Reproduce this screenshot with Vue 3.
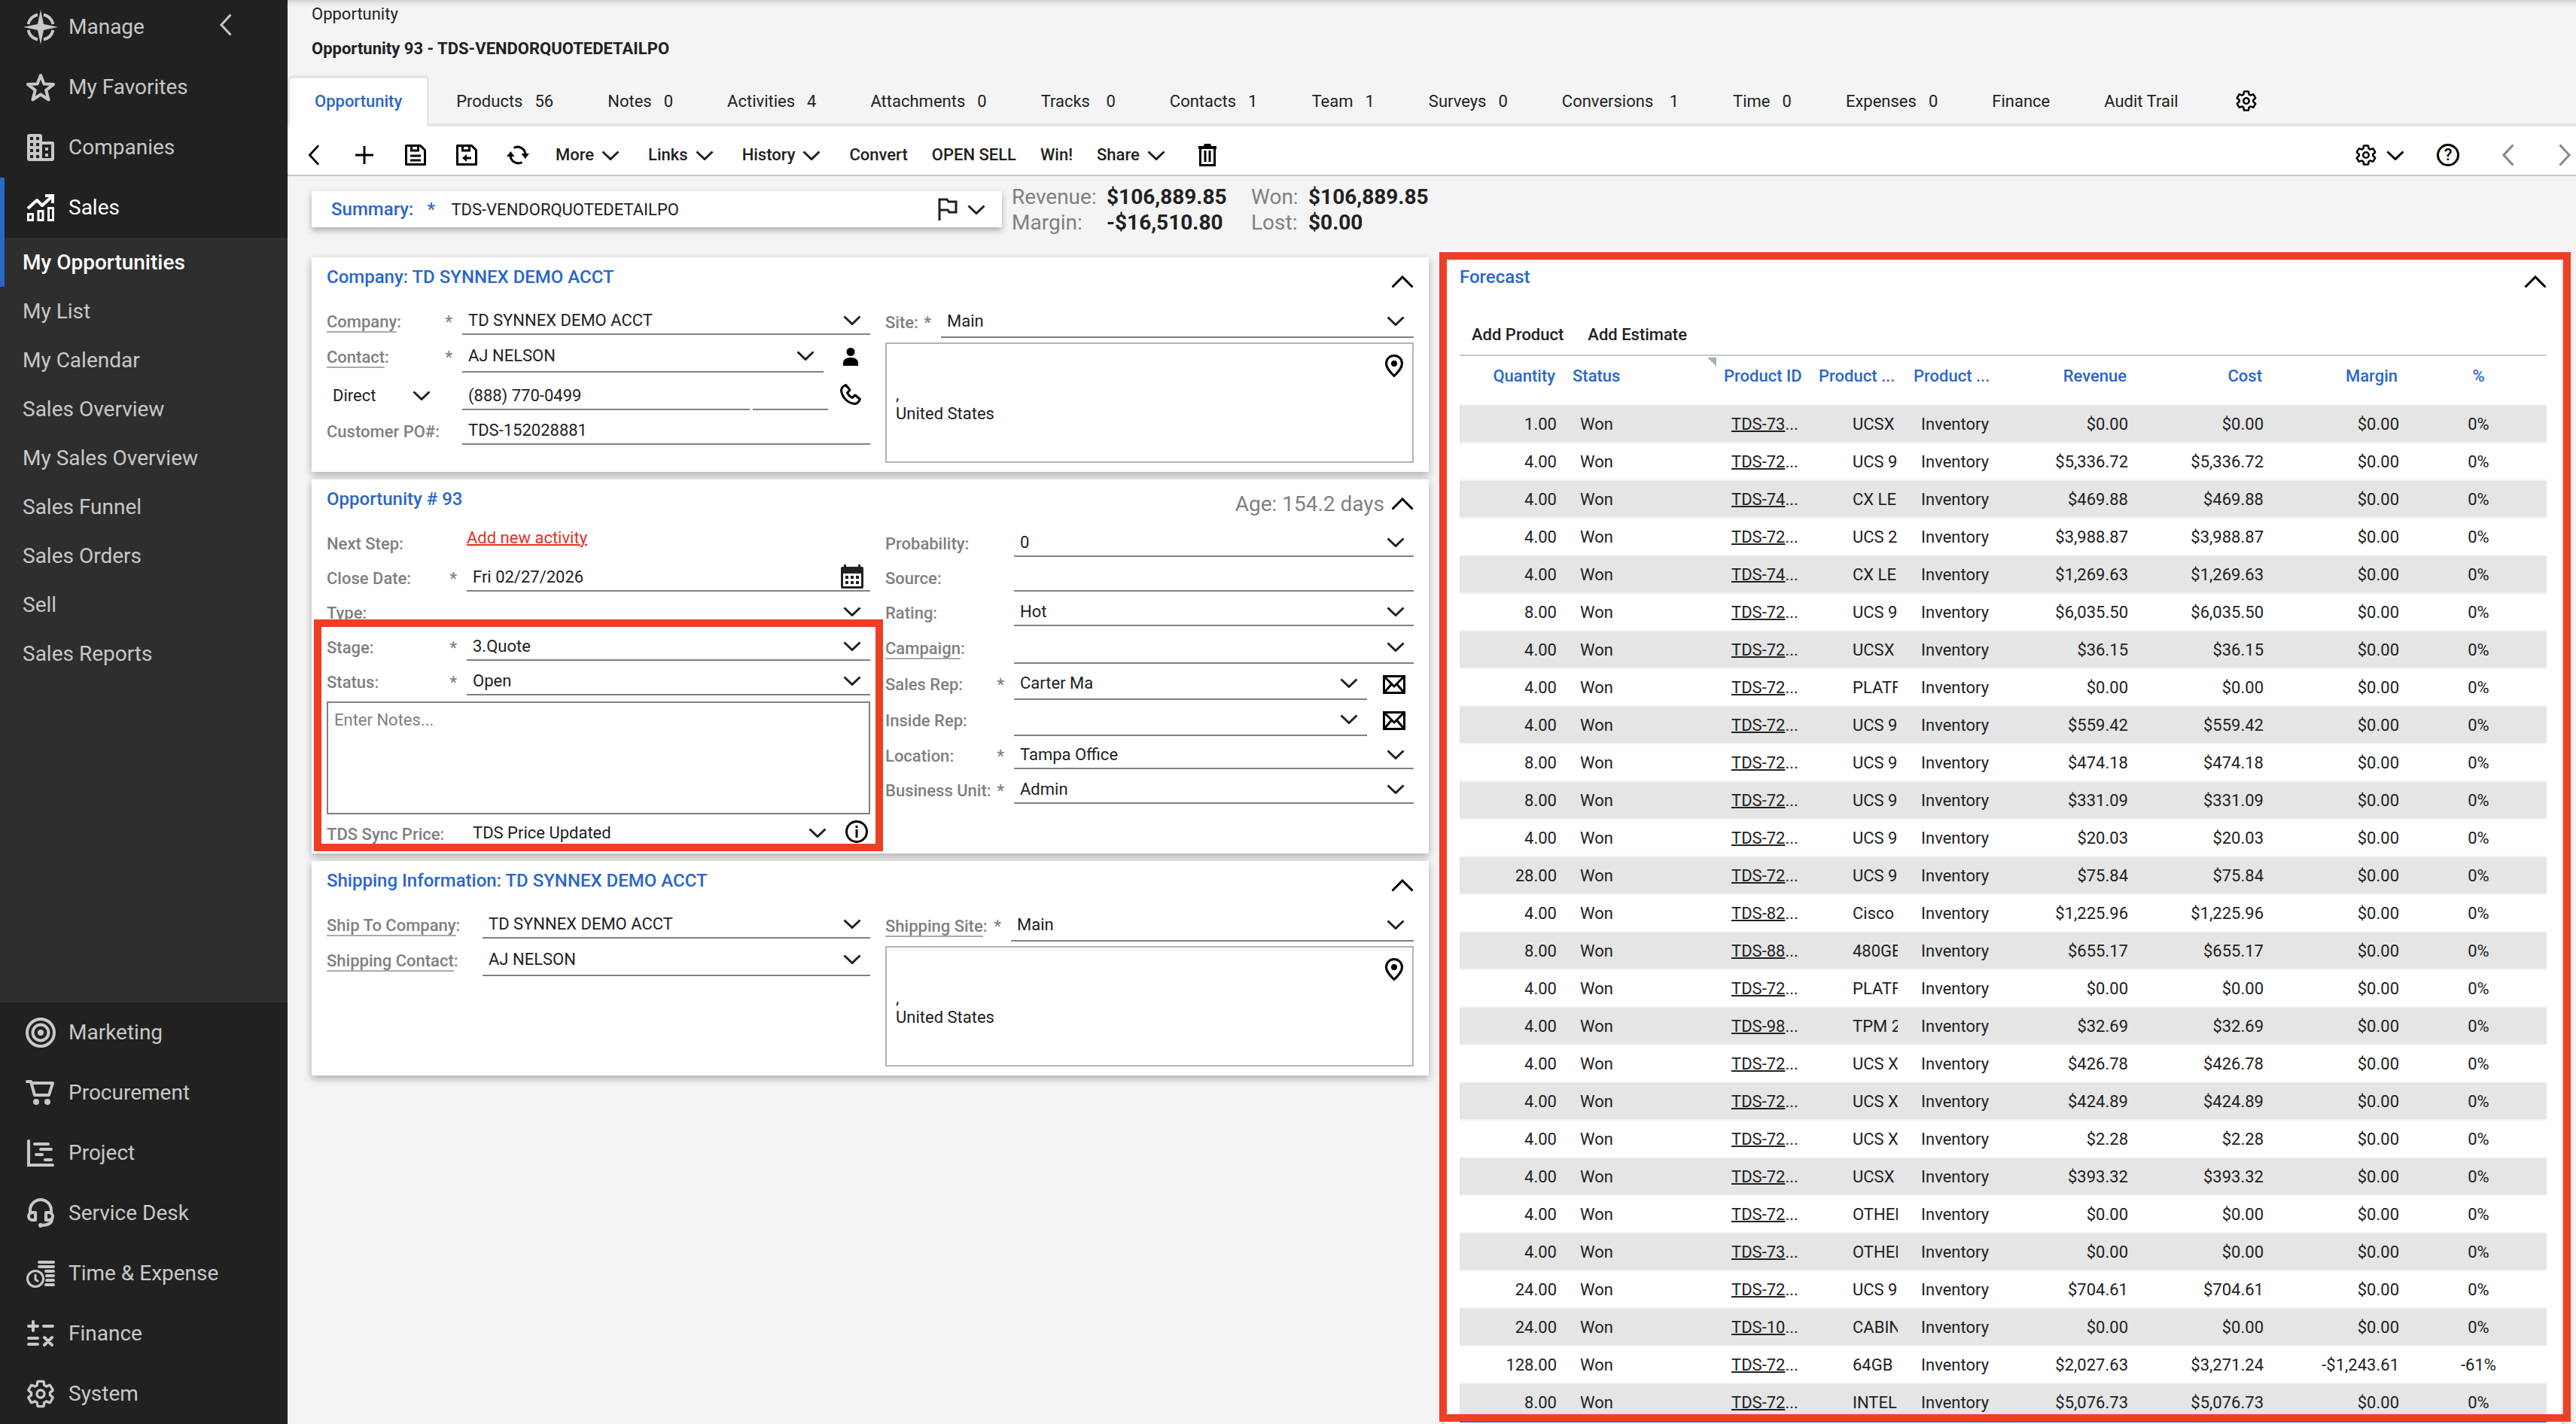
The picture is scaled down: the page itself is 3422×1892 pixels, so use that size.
<script setup>
const gearPath =
  'M19.43 12.98c.04-.32.07-.64.07-.98s-.03-.66-.07-.98l2.11-1.65c.19-.15.24-.42.12-.64l-2-3.46c-.12-.22-.39-.3-.61-.22l-2.49 1c-.52-.4-1.08-.73-1.69-.98l-.38-2.65C14.46 2.18 14.25 2 14 2h-4c-.25 0-.46.18-.49.42l-.38 2.65c-.61.25-1.17.59-1.69.98l-2.49-1c-.23-.09-.49 0-.61.22l-2 3.46c-.13.22-.07.49.12.64l2.11 1.65c-.04.32-.07.65-.07.98s.03.66.07.98l-2.11 1.65c-.19.15-.24.42-.12.64l2 3.46c.12.22.39.3.61.22l2.49-1c.52.4 1.08.73 1.69.98l.38 2.65c.03.24.24.42.49.42h4c.25 0 .46-.18.49-.42l.38-2.65c.61-.25 1.17-.59 1.69-.98l2.49 1c.23.09.49 0 .61-.22l2-3.46c.12-.22.07-.49-.12-.64l-2.11-1.65z'

const side = {
  compass:
    '<g stroke="none" fill="currentColor"><path d="M23 0l4 19 19 4-19 4-4 19-4-19-19-4 19-4z"/></g><g stroke-width="4"><path d="M27 6.500a17 17 0 0 1 12.500 12.500M39.500 27A17 17 0 0 1 27 39.500M19 39.500A17 17 0 0 1 6.500 27M6.500 19A17 17 0 0 1 19 6.500"/></g>',
  star: '<path stroke-width="4" stroke-linejoin="round" d="M20 4l4.500 11.500 12.500.6-9.800 7.800 3.400 12.600L20 29.500 9.400 36.500l3.400-12.600L3 16.100l12.500-.6z"/>',
  building:
    '<path fill="currentColor" stroke="none" fill-rule="evenodd" d="M4 2h15a3 3 0 0 1 3 3v7h13a3 3 0 0 1 3 3v20a3 3 0 0 1-3 3H5a3 3 0 0 1-3-3V4zM6 6v4h4V6zm8 0v4h4V6zM6 14v4h4v-4zm8 0v4h4v-4zM6 22v4h4v-4zm8 0v4h4v-4zM6 30v4h4v-4zm8 0v4h4v-4zM22 16v18h12V16zM26 20h4v4h-4zm0 8h4v4h-4z"/>',
  sales:
    '<path stroke-width="4" stroke-linejoin="round" d="M3 21L15 10l7 7L35 5"/><path stroke-width="4" d="M26 4h10v10"/><path stroke-width="3" d="M3.500 28.500h6v8h-6zM17 24.500h6v12h-6zM30.500 20.500h6v16h-6z"/>',
  target:
    '<circle cx="20" cy="20" r="18" stroke-width="4"/><circle cx="20" cy="20" r="10.500" stroke-width="4"/><circle cx="20" cy="20" r="4" fill="currentColor" stroke="none"/>',
  cart: '<path stroke-width="4" stroke-linecap="round" stroke-linejoin="round" d="M2 5h5l5 18h19l5-16H8"/><circle cx="14" cy="32" r="4" fill="currentColor" stroke="none"/><circle cx="29" cy="32" r="4" fill="currentColor" stroke="none"/>',
  project:
    '<path stroke-width="4" stroke-linecap="round" d="M4 4v32h32M12 8h18M20 15h14M14 22h8M26 29h8"/>',
  headset:
    '<path stroke-width="4" stroke-linecap="round" d="M6 20v-4a14 14 0 0 1 28 0v4"/><path stroke-width="4" stroke-linejoin="round" d="M13 19v10H9a5 5 0 0 1 0-10zM27 19v10h4a5 5 0 0 0 0-10z"/><path stroke-width="4" stroke-linecap="round" d="M35 27c0 6-5 9-14 9"/><circle cx="20" cy="36" r="3" fill="currentColor" stroke="none"/>',
  timeExpense:
    '<circle cx="13" cy="27" r="10.500" stroke-width="3"/><path stroke-width="3" stroke-linecap="round" d="M13 22v6l3 2"/><path stroke-width="4" stroke-linecap="round" d="M18 5h19M18 11h19M27 17h10M28 23h9M28 29h9M27 35h10"/>',
  math: '<path stroke-width="4" stroke-linecap="round" d="M4 10h12M10 4v12M24 10h12M4 26h12M4 34h12M25 25l10 10M35 25L25 35"/>',
}

const mainNav = [
  { label: 'My Favorites', icon: side.star },
  { label: 'Companies', icon: side.building },
  { label: 'Sales', icon: side.sales, active: true },
]
const subNav = ['My Opportunities', 'My List', 'My Calendar', 'Sales Overview', 'My Sales Overview', 'Sales Funnel', 'Sales Orders', 'Sell', 'Sales Reports']
const bottomNav = [
  { label: 'Marketing', icon: side.target },
  { label: 'Procurement', icon: side.cart },
  { label: 'Project', icon: side.project },
  { label: 'Service Desk', icon: side.headset },
  { label: 'Time & Expense', icon: side.timeExpense },
  { label: 'Finance', icon: side.math },
  { label: 'System', gear: true },
]

const tabs = [
  ['Products', '56'], ['Notes', '0'], ['Activities', '4'], ['Attachments', '0'], ['Tracks\u00a0', '0'],
  ['Contacts', '1'], ['Team', '1'], ['Surveys', '0'], ['Conversions\u00a0', '1'], ['Time', '0'],
  ['Expenses', '0'], ['Finance', ''], ['Audit Trail', ''],
]

const opportunityRight = [
  { id: 'probability', label: 'Probability', value: '0' },
  { id: 'source', label: 'Source', value: '', text: true },
  { id: 'rating', label: 'Rating', value: 'Hot' },
  { id: 'campaign', label: 'Campaign', value: '', size: 'tall', linked: true },
  { id: 'sales-rep', label: 'Sales Rep', value: 'Carter Ma', size: 'mid', required: true, mail: true },
  { id: 'inside-rep', label: 'Inside Rep', value: '', size: 'mid', mail: true },
  { id: 'location', label: 'Location', value: 'Tampa Office', size: 'short', required: true },
  { id: 'business-unit', label: 'Business Unit', value: 'Admin', required: true },
]

const rows = [
  ['1.00', '73', 'UCSX', '$0.00'],
  ['4.00', '72', 'UCS 9', '$5,336.72'],
  ['4.00', '74', 'CX LE', '$469.88'],
  ['4.00', '72', 'UCS 2', '$3,988.87'],
  ['4.00', '74', 'CX LE', '$1,269.63'],
  ['8.00', '72', 'UCS 9', '$6,035.50'],
  ['4.00', '72', 'UCSX', '$36.15'],
  ['4.00', '72', 'PLATF', '$0.00'],
  ['4.00', '72', 'UCS 9', '$559.42'],
  ['8.00', '72', 'UCS 9', '$474.18'],
  ['8.00', '72', 'UCS 9', '$331.09'],
  ['4.00', '72', 'UCS 9', '$20.03'],
  ['28.00', '72', 'UCS 9', '$75.84'],
  ['4.00', '82', 'Cisco', '$1,225.96'],
  ['8.00', '88', '480GB', '$655.17'],
  ['4.00', '72', 'PLATF', '$0.00'],
  ['4.00', '98', 'TPM 2', '$32.69'],
  ['4.00', '72', 'UCS X', '$426.78'],
  ['4.00', '72', 'UCS X', '$424.89'],
  ['4.00', '72', 'UCS X', '$2.28'],
  ['4.00', '72', 'UCSX', '$393.32'],
  ['4.00', '72', 'OTHER', '$0.00'],
  ['4.00', '73', 'OTHER', '$0.00'],
  ['24.00', '72', 'UCS 9', '$704.61'],
  ['24.00', '10', 'CABIN', '$0.00'],
  ['128.00', '72', '64GB', '$2,027.63', '$3,271.24', '-$1,243.61', '-61%'],
  ['8.00', '72', 'INTEL', '$5,076.73'],
].map(([qty, id, desc, revenue, cost = revenue, margin = '$0.00', pct = '0%']) => ({ qty, id: 'TDS-' + id, desc, revenue, cost, margin, pct }))
</script>

<template>
  <div class="app">
    <svg width="0" height="0" class="defs" aria-hidden="true">
      <symbol id="chev" viewBox="0 0 24 13"><path d="M1.500 1.500L12 11.500 22.500 1.500" stroke-width="3" /></symbol>
      <symbol id="up" viewBox="0 0 30 17"><path d="M1.500 15.500L15 2l13.500 13.500" stroke-width="3" /></symbol>
      <symbol id="left" viewBox="0 0 17 30"><path d="M15.500 1.500L3 15l12.500 13.500" stroke-width="3" /></symbol>
      <symbol id="gear" viewBox="0 0 24 24"><path :d="gearPath" stroke-width="2" /><circle cx="12" cy="12" r="3" stroke-width="2" /></symbol>
      <symbol id="pin" viewBox="0 0 24 30"><path d="M12 1.500c6 0 10.500 4.500 10.500 10.500 0 6-5.500 11.500-10.500 16.500C7 23.500 1.500 18 1.500 12 1.500 6 6 1.500 12 1.500z" stroke-width="3" /><circle cx="12" cy="12" r="4" fill="currentColor" stroke="none" /></symbol>
      <symbol id="mail" viewBox="0 0 30 25"><path d="M1.500 1.500h27v22h-27zM2 2l13 13L28 2M2 23l9.500-11M28 23l-9.500-11" stroke-width="3" /></symbol>
    </svg>

    <aside class="sidebar">
      <div class="nav-item nav-top">
        <svg width="46" height="46" viewBox="0 0 46 46" v-html="side.compass"></svg>
        <a href="#">Manage</a>
        <button class="collapse" aria-label="Collapse menu"><svg width="17" height="30"><use href="#left" /></svg></button>
      </div>
      <a v-for="item in mainNav" :key="item.label" href="#" class="nav-item" :class="{ active: item.active }">
        <svg width="40" height="40" viewBox="0 0 40 40" v-html="item.icon"></svg>{{ item.label }}
      </a>
      <nav class="subnav">
        <a v-for="(item, i) in subNav" :key="item" href="#" :class="{ current: i === 0 }">{{ item }}</a>
      </nav>
      <a v-for="item in bottomNav" :key="item.label" href="#" class="nav-item">
        <svg v-if="item.gear" width="40" height="40"><use href="#gear" /></svg>
        <svg v-else width="40" height="40" viewBox="0 0 40 40" v-html="item.icon"></svg>{{ item.label }}
      </a>
    </aside>

    <main class="main">
      <header class="head">
        <p>Opportunity</p>
        <h1>Opportunity 93 - TDS-VENDORQUOTEDETAILPO</h1>
      </header>

      <nav class="tabs">
        <a href="#" class="tab on">Opportunity</a>
        <a v-for="tab in tabs" :key="tab[0]" href="#" class="tab"><span>{{ tab[0] }}</span><span v-if="tab[1]">{{ tab[1] }}</span></a>
        <button class="tab-gear" aria-label="Tab settings"><svg width="30" height="30"><use href="#gear" /></svg></button>
      </nav>

      <div class="toolbar">
        <button class="ico" aria-label="Back"><svg width="17" height="28"><use href="#left" /></svg></button>
        <button class="ico" aria-label="New"><svg width="24" height="24" viewBox="0 0 24 24"><path d="M12 0v24M0 12h24" stroke-width="3" /></svg></button>
        <button class="ico" aria-label="Save">
          <svg width="28" height="28" viewBox="0 0 28 28"><path d="M1.500 1.500h19l6 6v19h-25z" stroke-width="3" stroke-linejoin="round" /><path d="M8.500 1v7h9V1M7 15h14M7 21h14" stroke-width="3" /></svg>
        </button>
        <button class="ico" aria-label="Save and close">
          <svg width="28" height="28" viewBox="0 0 28 28"><path d="M1.500 1.500h19l6 6v19h-25z" stroke-width="3" stroke-linejoin="round" /><path d="M8.500 1v7h9V1M10 18h10" stroke-width="3" /><path d="M8 18l6-5v10z" fill="currentColor" stroke="none" /></svg>
        </button>
        <button class="ico" aria-label="Refresh">
          <svg width="30" height="26" viewBox="0 0 30 26"><path d="M9.500 3.500A10.500 10.500 0 0 1 25 12.500M20.500 22.500A10.500 10.500 0 0 1 5 13.500" stroke-width="3" /><path d="M19.500 11H30l-5.300 7zM10.500 15H0l5.300-7z" fill="currentColor" stroke="none" /></svg>
        </button>
        <button class="txt">More<svg width="24" height="13"><use href="#chev" /></svg></button>
        <button class="txt">Links<svg width="24" height="13"><use href="#chev" /></svg></button>
        <button class="txt">History<svg width="24" height="13"><use href="#chev" /></svg></button>
        <button class="txt">Convert</button>
        <button class="txt">OPEN SELL</button>
        <button class="txt">Win!</button>
        <button class="txt">Share<svg width="24" height="13"><use href="#chev" /></svg></button>
        <button class="ico" aria-label="Delete">
          <svg width="24" height="30" viewBox="0 0 24 30"><path d="M2.500 5v23.500h19V5M9 9v15M15 9v15" stroke-width="3" /><path d="M0 3h7l1-3h8l1 3h7v4H0z" fill="currentColor" stroke="none" /></svg>
        </button>
        <div class="tools-right">
          <button aria-label="Settings" class="gear-menu"><svg width="30" height="30"><use href="#gear" /></svg><svg width="24" height="13"><use href="#chev" /></svg></button>
          <button class="help" aria-label="Help"><svg width="30" height="30" viewBox="0 0 30 30"><circle cx="15" cy="15" r="13.500" stroke-width="3" /><text x="15" y="22" text-anchor="middle" class="glyph">?</text></svg></button>
          <div class="pager">
            <button aria-label="Previous record"><svg width="17" height="30"><use href="#left" /></svg></button>
            <button aria-label="Next record"><svg width="17" height="30" viewBox="0 0 17 30"><path d="M1.500 1.500L14 15 1.500 28.500" stroke-width="3" /></svg></button>
          </div>
        </div>
      </div>

      <div class="content">
        <div class="col">
          <div class="top">
            <div class="summary">
              <label for="summary">Summary:</label><b>*</b>
              <input id="summary" value="TDS-VENDORQUOTEDETAILPO" />
              <button class="flag" aria-label="Flag">
                <svg width="26" height="30" viewBox="0 0 26 30"><path d="M2 30V2h10l2 3h10v14h-9l-2-3H2" stroke-width="3" /></svg>
                <svg width="24" height="13"><use href="#chev" /></svg>
              </button>
            </div>
            <dl class="totals">
              <dt>Revenue:</dt><dd>$106,889.85</dd><dt>Won:</dt><dd>$106,889.85</dd>
              <dt>Margin:</dt><dd>-$16,510.80</dd><dt>Lost:</dt><dd>$0.00</dd>
            </dl>
          </div>

          <section class="card">
            <div class="card-head">
              <h2>Company: TD SYNNEX DEMO ACCT</h2>
              <button class="fold" aria-label="Collapse"><svg width="30" height="17"><use href="#up" /></svg></button>
            </div>
            <div class="halves">
              <div class="form form-company">
                <div class="row">
                  <label for="company"><span><u>Company</u>:</span><i>*</i></label>
                  <div class="field"><select id="company"><option>TD SYNNEX DEMO ACCT</option></select><svg width="24" height="13"><use href="#chev" /></svg></div>
                </div>
                <div class="row tall">
                  <label for="contact"><span><u>Contact</u>:</span><i>*</i></label>
                  <div class="field"><select id="contact"><option>AJ NELSON</option></select><svg width="24" height="13"><use href="#chev" /></svg></div>
                  <button class="side-btn" aria-label="Open contact"><svg width="20" height="24" viewBox="0 0 20 24"><g fill="currentColor" stroke="none"><circle cx="10" cy="5.500" r="5.500" /><path d="M0 24v-4c0-4 4-7 10-7s10 3 10 7v4z" /></g></svg></button>
                </div>
                <div class="row phone">
                  <div class="field bare"><select aria-label="Phone type"><option>Direct</option></select><svg width="24" height="13"><use href="#chev" /></svg></div>
                  <div class="field"><input aria-label="Phone number" value="(888) 770-0499" /></div>
                  <div class="field ext"><input aria-label="Extension" /></div>
                  <button class="side-btn" aria-label="Call">
                    <svg width="28" height="28" viewBox="0 0 28 28"><path d="M7.500 1.500L13 8l-3.500 4c1.500 3 3.500 5 6.500 6.500l4-3.500 6.500 5.500c-2 4-4 6-7 6C10 25.500 2.500 18 1.500 8.500c0-3 2-5 6-7z" stroke-width="3" stroke-linejoin="round" /></svg>
                  </button>
                </div>
                <div class="row">
                  <label for="po"><span>Customer PO#:</span></label>
                  <div class="field"><input id="po" value="TDS-152028881" /></div>
                </div>
              </div>
              <div class="form form-site">
                <div class="row tall">
                  <label for="site"><span>Site:</span><i>*</i></label>
                  <div class="field"><select id="site"><option>Main</option></select><svg width="24" height="13"><use href="#chev" /></svg></div>
                </div>
                <div class="address"><address>,<br />United States</address><button aria-label="Map"><svg width="24" height="30"><use href="#pin" /></svg></button></div>
              </div>
            </div>
          </section>

          <section class="card card-opp">
            <div class="card-head">
              <h2>Opportunity # 93</h2>
              <span class="age">Age: 154.2 days</span>
              <button class="fold" aria-label="Collapse"><svg width="30" height="17"><use href="#up" /></svg></button>
            </div>
            <div class="halves">
              <div class="form form-opp">
                <div class="row">
                  <label for="next-step"><span>Next Step:</span></label>
                  <a id="next-step" href="#" class="add">Add new activity</a>
                </div>
                <div class="row">
                  <label for="close"><span>Close Date:</span><i>*</i></label>
                  <div class="field date"><input id="close" value="Fri 02/27/2026" />
                    <svg width="30" height="32" viewBox="0 0 30 32"><path fill="currentColor" stroke="none" fill-rule="evenodd" d="M4 0h3v3h16V0h3v3h2a2 2 0 0 1 2 2v25a2 2 0 0 1-2 2H2a2 2 0 0 1-2-2V5a2 2 0 0 1 2-2h2zM3 12v17h24V12zM6 15h4v4H6zm7 0h4v4h-4zm7 0h4v4h-4zM6 22h4v4H6zm7 0h4v4h-4zm7 0h4v4h-4z" /></svg>
                  </div>
                </div>
                <div class="row">
                  <label for="type"><span>Type:</span></label>
                  <div class="field"><select id="type"><option></option></select><svg width="24" height="13"><use href="#chev" /></svg></div>
                </div>
                <div class="marked">
                  <div class="row">
                    <label for="stage"><span>Stage:</span><i>*</i></label>
                    <div class="field"><select id="stage"><option>3.Quote</option></select><svg width="24" height="13"><use href="#chev" /></svg></div>
                  </div>
                  <div class="row">
                    <label for="status"><span>Status:</span><i>*</i></label>
                    <div class="field"><select id="status"><option>Open</option></select><svg width="24" height="13"><use href="#chev" /></svg></div>
                  </div>
                  <textarea aria-label="Notes" placeholder="Enter Notes..."></textarea>
                  <div class="row short">
                    <label for="sync"><span>TDS Sync Price:</span></label>
                    <div class="field"><select id="sync"><option>TDS Price Updated</option></select><svg width="24" height="13"><use href="#chev" /></svg></div>
                    <button class="side-btn info" aria-label="Sync information"><svg width="30" height="30" viewBox="0 0 30 30"><circle cx="15" cy="15" r="13.500" stroke-width="3" /><path d="M15 12v11M15 7v3" stroke-width="3" /></svg></button>
                  </div>
                  <div class="callout"></div>
                </div>
              </div>
              <div class="form form-details">
                <div v-for="f in opportunityRight" :key="f.id" class="row" :class="f.size">
                  <label :for="f.id"><span><u v-if="f.linked">{{ f.label }}</u><template v-else>{{ f.label }}</template>:</span><i v-if="f.required">*</i></label>
                  <div class="field">
                    <input v-if="f.text" :id="f.id" />
                    <template v-else><select :id="f.id"><option>{{ f.value }}</option></select><svg width="24" height="13"><use href="#chev" /></svg></template>
                  </div>
                  <button v-if="f.mail" class="side-btn" aria-label="Send email"><svg width="30" height="25"><use href="#mail" /></svg></button>
                </div>
              </div>
            </div>
          </section>

          <section class="card">
            <div class="card-head">
              <h2>Shipping Information: TD SYNNEX DEMO ACCT</h2>
              <button class="fold" aria-label="Collapse"><svg width="30" height="17"><use href="#up" /></svg></button>
            </div>
            <div class="halves">
              <div class="form form-ship">
                <div class="row">
                  <label for="ship-company"><span><u>Ship To Company</u>:</span></label>
                  <div class="field"><select id="ship-company"><option>TD SYNNEX DEMO ACCT</option></select><svg width="24" height="13"><use href="#chev" /></svg></div>
                </div>
                <div class="row tall">
                  <label for="ship-contact"><span><u>Shipping Contact</u>:</span></label>
                  <div class="field"><select id="ship-contact"><option>AJ NELSON</option></select><svg width="24" height="13"><use href="#chev" /></svg></div>
                </div>
              </div>
              <div class="form form-ship-site">
                <div class="row tall">
                  <label for="ship-site"><span><u>Shipping Site</u>:</span><i>*</i></label>
                  <div class="field"><select id="ship-site"><option>Main</option></select><svg width="24" height="13"><use href="#chev" /></svg></div>
                </div>
                <div class="address"><address>,<br />United States</address><button aria-label="Map"><svg width="24" height="30"><use href="#pin" /></svg></button></div>
              </div>
            </div>
          </section>
        </div>

        <div class="col col-forecast">
          <section class="card forecast">
            <div class="card-head">
              <h2>Forecast</h2>
              <button class="fold" aria-label="Collapse"><svg width="30" height="17"><use href="#up" /></svg></button>
            </div>
            <div class="actions"><button>Add Product</button><button>Add Estimate</button></div>
            <table>
              <colgroup>
                <col class="w-qty" /><col class="w-status" /><col class="w-prod" /><col class="w-prod" /><col class="w-prod" />
                <col class="w-money" /><col class="w-money" /><col class="w-money" /><col />
              </colgroup>
              <thead>
                <tr>
                  <th class="num">Quantity</th><th class="sorted">Status</th><th>Product ID</th><th>Product ...</th><th>Product ...</th>
                  <th class="num">Revenue</th><th class="num">Cost</th><th class="num">Margin</th><th class="pct">%</th>
                </tr>
              </thead>
              <tbody>
                <tr v-for="(r, i) in rows" :key="i">
                  <td class="num">{{ r.qty }}</td><td>Won</td><td><a href="#">{{ r.id }}</a>...</td>
                  <td class="desc"><div>{{ r.desc }}</div></td><td>Inventory</td>
                  <td class="num">{{ r.revenue }}</td><td class="num">{{ r.cost }}</td><td class="num">{{ r.margin }}</td><td class="pct">{{ r.pct }}</td>
                </tr>
              </tbody>
            </table>
          </section>
          <div class="callout"></div>
        </div>
      </div>
    </main>
  </div>
</template>

<style>
body {
  margin: 0;
  overflow: hidden;
}
</style>

<style scoped>
.app {
  display: flex;
  height: 100vh;
  overflow: hidden;
  font: 22px/26px Roboto, sans-serif;
  color: #212121;
  background: #f4f4f4;
}
.app * {
  box-sizing: border-box;
}
.defs {
  position: absolute;
}
svg {
  display: block;
  flex: none;
  fill: none;
  stroke: currentColor;
}
button, input, select, textarea {
  margin: 0;
  padding: 0;
  border: 0;
  border-radius: 0;
  outline: 0;
  background: none;
  color: inherit;
  font: inherit;
}
h1, h2, p, dl, dd { margin: 0; font-size: 22px; }
a { color: inherit; text-decoration: none; }

/* Sidebar */
.sidebar {
  flex: none;
  display: flex;
  flex-direction: column;
  width: 382px;
  background: #212121;
  color: #c8c8c8;
  font-size: 28px;
  line-height: 34px;
}
.nav-item {
  flex: none;
  display: flex;
  align-items: center;
  gap: 17px;
  height: 80px;
  padding: 0 34px;
}
.nav-top { height: 76px; padding-bottom: 4px; gap: 14px; padding-left: 31px; }
.collapse { margin: 0 40px 6px auto; }
.nav-item.active { color: #fff; box-shadow: inset 6px 0 #2b66c9; }
.subnav {
  flex: 1;
  background: #2e2e2e;
}
.subnav a {
  display: block;
  padding: 0 30px;
  line-height: 65px;
}
.subnav .current { color: #fff; font-weight: 500; box-shadow: inset 6px 0 #2b66c9; }

/* Header and tabs */
.main {
  flex: 1;
  min-width: 0;
  display: flex;
  flex-direction: column;
}
.head {
  height: 100px;
  padding: 0 32px;
  box-shadow: inset 0 12px 10px -10px rgba(0, 0, 0, 0.2);
}
.head p { line-height: 37px; }
.head h1 { line-height: 56px; font-weight: 700; }
.tabs {
  display: flex;
  height: 68px;
  box-shadow: inset 0 -4px #e5e5e5;
}
.tab {
  display: flex;
  align-items: center;
  gap: 16px;
  padding: 4px 36px 2px;
}
.tab.on {
  padding: 0 33px 2px;
  border: solid #e5e5e5;
  border-width: 4px 3px 0;
  border-radius: 6px 6px 0 0;
  background: #fff;
  color: #2b66c9;
  font-weight: 500;
}
.tab-gear { padding: 0 39px; color: #000; }

/* Toolbar */
.toolbar {
  display: flex;
  align-items: center;
  height: 66px;
  padding-top: 12px;
  border-bottom: 2px solid #c8c8c8;
  background: #fff;
  font-weight: 500;
}
.ico {
  display: flex;
  justify-content: center;
  align-items: center;
  width: 68px;
  color: #000;
}
.txt {
  display: flex;
  align-items: center;
  padding: 0 16px;
}
.txt svg { margin: 0 6px 0 10px; }
.tools-right {
  display: flex;
  align-items: center;
  gap: 43px;
  margin-left: auto;
  padding-right: 6px;
}
.help { color: #000; }
.gear-menu { display: flex; align-items: center; gap: 12px; color: #000; }
.pager { display: flex; gap: 59px; margin-left: 13px; color: #888; }
.glyph { fill: currentColor; stroke: none; font: 500 22px Roboto, sans-serif; }

/* Content */
.content {
  flex: 1;
  min-height: 0;
  display: grid;
  grid-template-columns: 1fr 1fr;
  grid-template-rows: 100%;
  gap: 21px;
  padding: 0 19px 0 32px;
}
.col { min-width: 0; }
.top {
  display: flex;
  align-items: flex-start;
  gap: 13px;
  height: 108px;
  padding-top: 11px;
}
.summary {
  flex: 1;
  display: flex;
  align-items: center;
  height: 48px;
  margin-top: 9px;
  padding: 0 22px 0 26px;
  background: #fff;
  box-shadow: 0 4px 8px rgba(0, 0, 0, 0.3);
}
.summary label, .summary b { color: #2b66c9; font-size: 24px; font-weight: 500; }
.summary b { width: 32px; margin-left: 18px; }
.summary input { flex: 1; min-width: 0; padding-top: 2px; }
.flag { display: flex; align-items: center; gap: 13px; }
.totals {
  display: grid;
  grid-template-columns: 126px 192px 76px 160px;
  font-size: 28px;
  line-height: 34px;
}
.totals dt { color: #808080; }
.totals dd { font-weight: 700; font-size: 28px; }

.card {
  margin-bottom: 10px;
  padding: 0 20px 12px;
  background: #fff;
  box-shadow: 0 4px 10px rgba(0, 0, 0, 0.3);
}
.card-opp { padding-bottom: 8px; }
.card-head {
  display: flex;
  align-items: flex-start;
  height: 57px;
}
.card-head h2 {
  flex: 1;
  color: #2b66c9;
  font-size: 24px;
  font-weight: 500;
  line-height: 52px;
}
.age { padding: 17px 9px 0; color: #808080; font-size: 28px; line-height: 32px; }
.fold { margin-top: 24px; color: #000; }
.halves {
  display: grid;
  grid-template-columns: 722fr 702fr;
  gap: 20px;
}
.form-company { --label: 180px; }
.form-site { --label: 74px; }
.form-opp { --label: 186px; }
.form-details { --label: 171px; }
.form-ship { --label: 207px; }
.form-ship-site { --label: 167px; }
.row {
  display: flex;
  align-items: flex-end;
  height: 46px;
}
.row.tall, .row.phone { height: 50px; }
.row.mid { height: 48px; }
.row.short { height: 44px; }
.row label {
  flex: none;
  display: flex;
  justify-content: space-between;
  width: var(--label);
  padding: 0 13px 4px 0;
  color: #808080;
  font-weight: 500;
  white-space: nowrap;
}
.row.tall label, .row.mid label { padding-bottom: 7px; }
.row u { text-decoration: none; border-bottom: 2px solid #aaa; }
.row i { font-style: normal; }
.field {
  flex: 1;
  min-width: 0;
  display: grid;
  align-items: center;
  height: 38px;
  border-bottom: 2px solid #808080;
}
.tall .field, .mid .field { height: 44px; }
.field > * { grid-area: 1 / 1; }
.field svg { justify-self: end; margin-right: 12px; pointer-events: none; }
.field.date svg { margin-right: 9px; }
.field select, .field input {
  appearance: none;
  width: 100%;
  height: 100%;
  padding: 1px 8px 0;
}
.phone .bare { flex: none; width: 150px; margin-right: 30px; border-color: transparent; }
.phone .ext { flex: none; width: 100px; margin-left: 4px; }
.side-btn {
  flex: none;
  display: flex;
  align-items: center;
  justify-content: center;
  width: 30px;
  height: 42px;
  margin: 0 11px 0 21px;
  color: #000;
}
.phone .side-btn { margin-left: 15px; }
.row .info { margin: 0 3px 0 13px; }
.add {
  padding-bottom: 12px;
  color: #e5301f;
  text-decoration: underline;
  text-decoration-thickness: 2px;
}
textarea {
  display: block;
  width: 100%;
  height: 150px;
  margin-top: 8px;
  padding: 10px 8px;
  border: 2px solid #808080;
  resize: none;
}
textarea::placeholder { color: #808080; }
.address {
  display: flex;
  justify-content: space-between;
  align-items: flex-start;
  height: 160px;
  margin-top: 6px;
  padding: 14px 12px 0 12px;
  border: 2px solid #b3b3b3;
}
.address address { padding-top: 40px; font-style: normal; }
.address button { color: #000; }

.marked, .col-forecast { position: relative; }
.callout {
  position: absolute;
  border: 10px solid #eb4026;
  pointer-events: none;
}
.marked .callout { inset: -9px -17px -5px; }
.col-forecast .callout { inset: 101px -12px 3px -7px; }

/* Forecast */
.forecast { margin-top: 108px; }
.actions {
  display: flex;
  align-items: center;
  height: 74px;
  padding-top: 20px;
  border-bottom: 2px solid #c8c8c8;
}
.actions button { padding: 0 16px; font-weight: 500; }
table {
  width: 100%;
  table-layout: fixed;
  border-spacing: 0;
  border-bottom: 3px solid #2b66c9;
}
.w-qty { width: 140px; }
.w-status { width: 201px; }
.w-prod { width: 126px; }
.w-money { width: 180px; }
th {
  height: 64px;
  padding: 0 0 10px 10px;
  color: #2b66c9;
  font-weight: 500;
  text-align: left;
  white-space: nowrap;
}
.sorted { background: linear-gradient(to top right, transparent 50%, #9fb0bb 50%) right top 2px / 12px 12px no-repeat; }
td {
  height: 50px;
  padding: 2px 0 0 20px;
  border-top: 2px solid #f3f3f3;
  white-space: nowrap;
}
tbody tr:nth-child(odd) { background: #e5e5e5; }
th.num { padding-right: 13px; text-align: right; }
td.num { padding: 2px 11px 0 0; text-align: right; }
td a { text-decoration: underline; text-decoration-thickness: 2px; }
td.desc { padding-left: 55px; }
.desc div { width: 60px; overflow: hidden; }
th.pct { padding-left: 4px; text-align: center; }
td.pct { padding: 2px 0 0 4px; text-align: center; }
</style>
